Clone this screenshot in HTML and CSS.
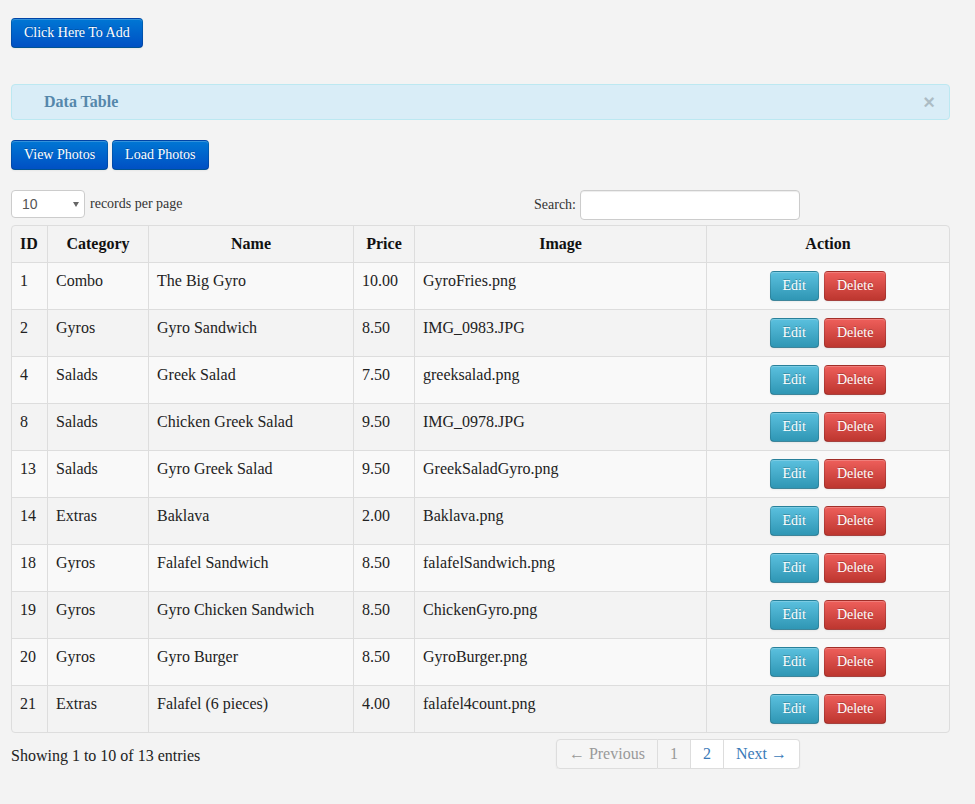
FILE: index.html
```html
<!DOCTYPE html>
<html>
<head>
<meta charset="utf-8">
<title>Data Table</title>
<link rel="stylesheet" href="styles.css">
</head>
<body>
<div class="page">
  <div class="top-actions">
    <button class="btn btn-primary">Click Here To Add</button>
  </div>

  <div class="alert">
    <span class="alert-title">Data Table</span>
    <span class="close">&times;</span>
  </div>

  <div class="photo-actions">
    <button class="btn btn-primary">View Photos</button>
    <button class="btn btn-primary">Load Photos</button>
  </div>

  <div class="dt-top">
    <label class="dt-length">
      <span class="select-wrap">
        <select class="select">
          <option>10</option>
          <option>25</option>
          <option>50</option>
        </select>
      </span>
      records per page
    </label>
    <label class="dt-search">Search: <input type="text" class="search-input"></label>
  </div>

  <table class="table">
    <colgroup>
      <col class="c-id"><col class="c-cat"><col class="c-name"><col class="c-price"><col class="c-img"><col class="c-act">
    </colgroup>
    <thead>
      <tr><th>ID</th><th>Category</th><th>Name</th><th>Price</th><th>Image</th><th>Action</th></tr>
    </thead>
    <tbody>
      <tr><td>1</td><td>Combo</td><td>The Big Gyro</td><td>10.00</td><td>GyroFries.png</td><td><div class="acts"><button class="btn btn-info">Edit</button><button class="btn btn-danger">Delete</button></div></td></tr>
      <tr><td>2</td><td>Gyros</td><td>Gyro Sandwich</td><td>8.50</td><td>IMG_0983.JPG</td><td><div class="acts"><button class="btn btn-info">Edit</button><button class="btn btn-danger">Delete</button></div></td></tr>
      <tr><td>4</td><td>Salads</td><td>Greek Salad</td><td>7.50</td><td>greeksalad.png</td><td><div class="acts"><button class="btn btn-info">Edit</button><button class="btn btn-danger">Delete</button></div></td></tr>
      <tr><td>8</td><td>Salads</td><td>Chicken Greek Salad</td><td>9.50</td><td>IMG_0978.JPG</td><td><div class="acts"><button class="btn btn-info">Edit</button><button class="btn btn-danger">Delete</button></div></td></tr>
      <tr><td>13</td><td>Salads</td><td>Gyro Greek Salad</td><td>9.50</td><td>GreekSaladGyro.png</td><td><div class="acts"><button class="btn btn-info">Edit</button><button class="btn btn-danger">Delete</button></div></td></tr>
      <tr><td>14</td><td>Extras</td><td>Baklava</td><td>2.00</td><td>Baklava.png</td><td><div class="acts"><button class="btn btn-info">Edit</button><button class="btn btn-danger">Delete</button></div></td></tr>
      <tr><td>18</td><td>Gyros</td><td>Falafel Sandwich</td><td>8.50</td><td>falafelSandwich.png</td><td><div class="acts"><button class="btn btn-info">Edit</button><button class="btn btn-danger">Delete</button></div></td></tr>
      <tr><td>19</td><td>Gyros</td><td>Gyro Chicken Sandwich</td><td>8.50</td><td>ChickenGyro.png</td><td><div class="acts"><button class="btn btn-info">Edit</button><button class="btn btn-danger">Delete</button></div></td></tr>
      <tr><td>20</td><td>Gyros</td><td>Gyro Burger</td><td>8.50</td><td>GyroBurger.png</td><td><div class="acts"><button class="btn btn-info">Edit</button><button class="btn btn-danger">Delete</button></div></td></tr>
      <tr><td>21</td><td>Extras</td><td>Falafel (6 pieces)</td><td>4.00</td><td>falafel4count.png</td><td><div class="acts"><button class="btn btn-info">Edit</button><button class="btn btn-danger">Delete</button></div></td></tr>
    </tbody>
  </table>

  <div class="dt-bottom">
    <div class="dt-info">Showing 1 to 10 of 13 entries</div>
    <ul class="pagination">
      <li class="disabled"><a>&larr; Previous</a></li>
      <li class="active"><a>1</a></li>
      <li><a>2</a></li>
      <li><a>Next &rarr;</a></li>
    </ul>
  </div>
</div>
</body>
</html>
```

FILE: styles.css
```css
* { box-sizing: border-box; }

html, body {
  margin: 0;
  background: #f3f3f3;
}

body {
  font-family: "Liberation Serif", "Times New Roman", serif;
  font-size: 14px;
  line-height: 20px;
  color: #333;
}

.page {
  width: 939px;
  margin-left: 11px;
  padding-top: 18px;
}

/* Buttons */
.btn {
  display: inline-block;
  font-family: "Liberation Serif", "Times New Roman", serif;
  font-size: 14px;
  line-height: 20px;
  padding: 4px 12px;
  height: 30px;
  border-radius: 4px;
  border: 1px solid rgba(0, 0, 0, 0.15);
  border-bottom-color: rgba(0, 0, 0, 0.3);
  color: #fff;
  text-shadow: 0 -1px 0 rgba(0, 0, 0, 0.25);
  box-shadow: inset 0 1px 0 rgba(255, 255, 255, 0.2), 0 1px 2px rgba(0, 0, 0, 0.05);
  cursor: pointer;
  vertical-align: middle;
}

.btn-primary {
  background: linear-gradient(to bottom, #0077d4, #0050c4);
}

.btn-info {
  background: linear-gradient(to bottom, #5bc0de, #2f96b4);
}

.btn-danger {
  background: linear-gradient(to bottom, #ee5f5b, #bd362f);
}

.top-actions {
  display: flex;
}

/* Alert */
.alert {
  margin-top: 36px;
  height: 36px;
  background: #d9edf7;
  border: 1px solid #bce8f1;
  border-radius: 4px;
  display: flex;
  align-items: center;
  padding: 0 14px 0 32px;
}

.alert-title {
  font-weight: bold;
  font-size: 16px;
  color: #5587ab;
  flex: 1;
}

.close {
  font-family: "Liberation Sans", Arial, sans-serif;
  font-size: 20px;
  font-weight: bold;
  color: #000;
  opacity: 0.2;
  line-height: 20px;
}

.photo-actions {
  margin-top: 20px;
  display: flex;
  gap: 4px;
}

/* DataTables header controls */
.dt-top {
  margin-top: 20px;
  display: flex;
  align-items: flex-start;
  height: 30px;
}

.dt-length {
  display: flex;
  align-items: center;
  gap: 5px;
  height: 28px;
  color: #333;
}

.select-wrap {
  position: relative;
  display: inline-block;
  width: 74px;
  height: 28px;
}

.select {
  appearance: none;
  -webkit-appearance: none;
  width: 74px;
  height: 28px;
  border: 1px solid #ccc;
  border-radius: 4px;
  background: #fff;
  font-family: "Liberation Sans", Arial, sans-serif;
  font-size: 14px;
  color: #555;
  padding: 0 0 0 10px;
}

.select-wrap::after {
  content: "";
  position: absolute;
  right: 6px;
  top: 12px;
  border-left: 3px solid transparent;
  border-right: 3px solid transparent;
  border-top: 5px solid #666;
  pointer-events: none;
}

.dt-search {
  margin-left: auto;
  margin-right: 150px;
  display: flex;
  align-items: center;
  gap: 4px;
  height: 30px;
}

.search-input {
  width: 220px;
  height: 30px;
  border: 1px solid #ccc;
  border-radius: 4px;
  background: #fff;
  box-shadow: inset 0 1px 1px rgba(0, 0, 0, 0.075);
}

/* Table */
.table {
  margin-top: 5px;
  width: 939px;
  table-layout: fixed;
  border-collapse: separate;
  border-spacing: 0;
  border: 1px solid #ddd;
  border-radius: 4px;
  font-size: 16px;
}

.c-id { width: 35px; }
.c-cat { width: 101px; }
.c-name { width: 205px; }
.c-price { width: 61px; }
.c-img { width: 292px; }
.c-act { width: auto; }

.table th,
.table td {
  padding: 8px;
  line-height: 20px;
  text-align: left;
  vertical-align: top;
  border-left: 1px solid #ddd;
  border-top: 1px solid #ddd;
}

.table th:first-child,
.table td:first-child {
  border-left: 0;
}

.table thead th {
  border-top: 0;
  text-align: center;
  font-weight: bold;
  color: #111;
  height: 36px;
}

.table thead th:first-child {
  text-align: left;
}

.table tbody td {
  color: #222;
}

.table tbody tr:nth-child(odd) td {
  background: #f9f9f9;
}

.acts {
  display: flex;
  justify-content: center;
  gap: 5px;
}

/* Footer */
.dt-bottom {
  margin-top: 6px;
  display: flex;
  align-items: center;
  font-size: 16px;
}

.dt-info {
  color: #222;
  padding-top: 4px;
}

.pagination {
  list-style: none;
  margin: 0 150px 0 auto;
  padding: 0;
  display: flex;
  border-radius: 4px;
  box-shadow: 0 1px 2px rgba(0, 0, 0, 0.05);
}

.pagination li a {
  display: block;
  padding: 4px 12px;
  line-height: 20px;
  height: 30px;
  border: 1px solid #ddd;
  border-left-width: 0;
  background: #fff;
  color: #3a7ab8;
}

.pagination li:first-child a {
  border-left-width: 1px;
  border-radius: 4px 0 0 4px;
}

.pagination li:last-child a {
  border-radius: 0 4px 4px 0;
}

.pagination li.disabled a {
  color: #999;
  background: #f5f5f5;
}

.pagination li.active a {
  color: #999;
  background: #f5f5f5;
}
```
